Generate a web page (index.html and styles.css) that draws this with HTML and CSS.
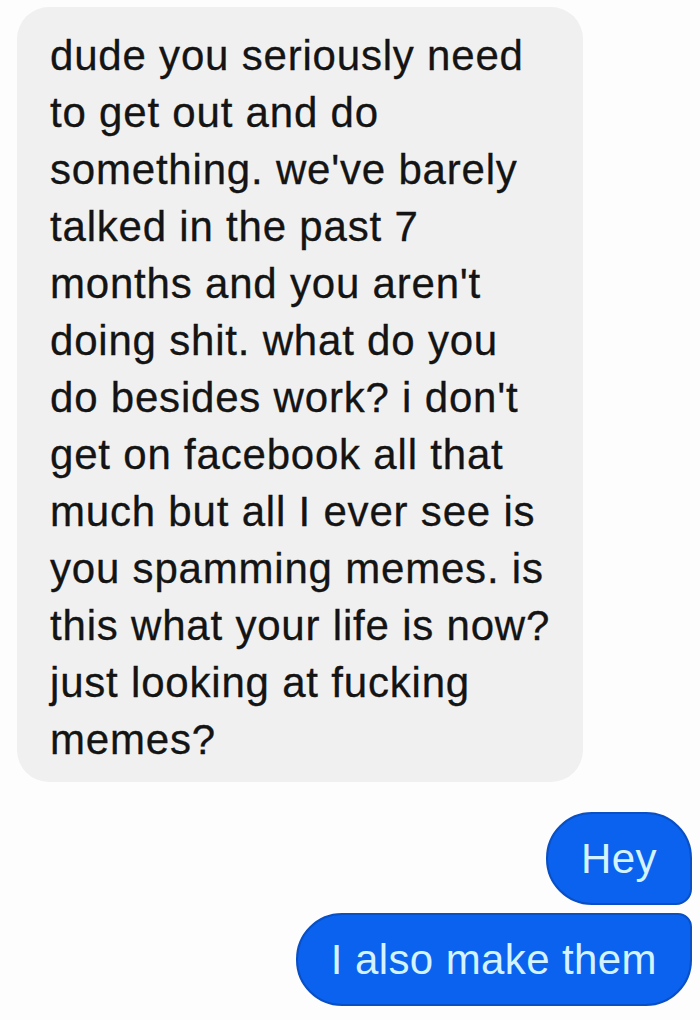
FILE: index.html
```html
<!DOCTYPE html>
<html lang="en">
<head>
  <meta charset="UTF-8">
  <meta name="viewport" content="width=device-width, initial-scale=1.0">
  <title>Messages</title>
  <link rel="stylesheet" href="styles.css">
</head>
<body>
  <div id="thread">
    <div class="bubble incoming">
      dude you seriously need<br>
      to get out and do<br>
      something. we've barely<br>
      talked in the past 7<br>
      months and you aren't<br>
      doing shit. what do you<br>
      do besides work? i don't<br>
      get on facebook all that<br>
      much but all I ever see is<br>
      you spamming memes. is<br>
      this what your life is now?<br>
      just looking at fucking<br>
      memes?
    </div>
    <div class="outgoing-group">
      <div class="bubble outgoing first">Hey</div>
      <div class="bubble outgoing last">I also make them</div>
    </div>
  </div>
</body>
</html>
```

FILE: styles.css
```css
html, body {
  margin: 0;
  padding: 0;
  height: 100%;
  background: #fdfdfd;
  font-family: 'Liberation Sans', Arial, sans-serif;
  overflow: hidden;
}
#thread {
  display: flex;
  flex-direction: column;
  padding: 7px 8px 0 17px;
}
.bubble {
  font-size: 42px;
  letter-spacing: 0.8px;
  line-height: 57px;
  box-sizing: border-box;
}
.incoming {
  width: 566px;
  height: 775px;
  padding: 20px 0 14px 33px;
  background: #f0f0f0;
  color: #141414;
  -webkit-text-stroke: 0.3px #141414;
  border-radius: 32px;
  white-space: nowrap;
}
.outgoing-group {
  display: flex;
  flex-direction: column;
  align-items: flex-end;
  gap: 8px;
  margin-top: 30px;
}
.outgoing {
  height: 93px;
  display: flex;
  align-items: center;
  padding: 0 33px 0 33px;
  background: #0b62ee;
  color: #d2f3ff;
  border: 2px solid #0a4fc4;
  letter-spacing: 0.4px;
  white-space: nowrap;
}
.outgoing.first {
  border-radius: 46px 46px 16px 46px;
}
.outgoing.last {
  border-radius: 46px 14px 46px 46px;
}
```
